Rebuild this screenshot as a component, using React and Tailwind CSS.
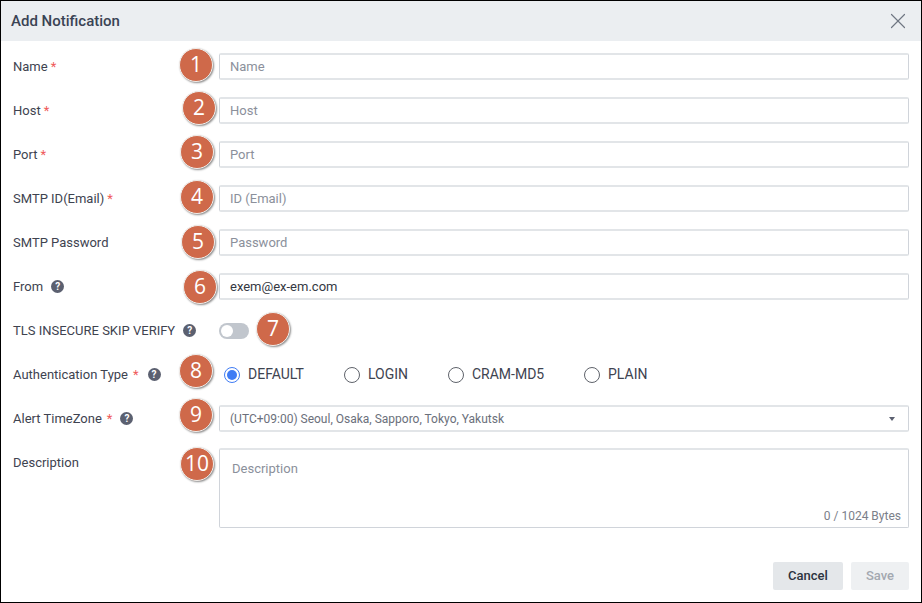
import { X } from "lucide-react";

const font = "font-['Roboto','Liberation_Sans',sans-serif]";

function Badge({ n, className }) {
  return (
    <span className={`absolute z-10 flex size-[34px] items-center justify-center rounded-full border-[1.5px] border-[#f1efec] bg-[#cf694a] text-[21px] font-['Open_Sans',sans-serif] font-medium text-white shadow-[1px_1px_2px_rgba(0,0,0,0.45)] ${className}`}>
      {n}
    </span>
  );
}

function Help({ className = "" }) {
  return (
    <span className={`flex size-[13px] items-center justify-center rounded-full bg-[#5b6070] text-[10px] font-bold leading-none text-white ${className}`}>
      ?
    </span>
  );
}

function Label({ children, required, help, starGap = "ml-[3px]", helpGap = "ml-[8px]" }) {
  return (
    <div className="flex w-[206px] shrink-0 items-center text-[13px] text-[#3e4350]">
      <span>{children}</span>
      {required && <span className={`${starGap} text-[#ef5a5a]`}>*</span>}
      {help && <Help className={helpGap} />}
    </div>
  );
}

function TextRow({ label, placeholder, value, required, help, badge, badgeClass }) {
  return (
    <div className="relative flex h-[27px] items-center">
      <Label required={required} help={help}>{label}</Label>
      <Badge n={badge} className={badgeClass} />
      <div className="flex h-[27px] flex-1 items-center rounded-[2px] border-x border-y-2 border-x-[#d0d4da] border-y-[#e2e5e8] px-[10px] text-[13px]">
        {value ? <span className="text-[#343842]">{value}</span> : <span className="text-[#8b909b]">{placeholder}</span>}
      </div>
    </div>
  );
}

function Radio({ label, checked, width }) {
  return (
    <div className={`flex items-center gap-[8px] text-[14px] text-[#3e4350] ${width}`}>
      {checked ? (
        <span className="flex size-4 items-center justify-center rounded-full border border-[#3f7cf4]">
          <span className="size-[10px] rounded-full bg-[#3f7cf4]" />
        </span>
      ) : (
        <span className="size-4 rounded-full border border-[#5f636b]" />
      )}
      <span>{label}</span>
    </div>
  );
}

export default function App() {
  return (
    <div className={`flex h-[603px] w-[922px] flex-col border border-black bg-white ${font}`}>
      <div className="flex h-10 shrink-0 items-center justify-between bg-[#ebeef1] pl-[10px] pr-[10px]">
        <span className="text-[15px] font-medium text-[#3a4354]">Add Notification</span>
        <X size={26} strokeWidth={1.1} className="text-[#6f7683]" />
      </div>

      <div className="flex flex-col gap-[17px] pl-3 pr-3 pt-3">
        <TextRow label="Name" placeholder="Name" required badge={1} badgeClass="left-[166px] top-[-5px]" />
        <TextRow label="Host" placeholder="Host" required badge={2} badgeClass="left-[169px] top-[-6px]" />
        <TextRow label="Port" placeholder="Port" required badge={3} badgeClass="left-[167px] top-[-6px]" />
        <TextRow label="SMTP ID(Email)" placeholder="ID (Email)" required badge={4} badgeClass="left-[167px] top-[-5px]" />
        <TextRow label="SMTP Password" placeholder="Password" badge={5} badgeClass="left-[168px] top-[-4px]" />
        <TextRow label="From" value="exem@ex-em.com" help badge={6} badgeClass="left-[170px] top-[-3px]" />

        <div className="relative flex h-[27px] items-center">
          <Label help>TLS INSECURE SKIP VERIFY</Label>
          <span className="flex h-4 w-[30px] items-center rounded-full bg-[#c1c6cd] pl-[2px]">
            <span className="size-3 rounded-full bg-white" />
          </span>
          <Badge n={7} className="left-[243px] top-[-5px]" />
        </div>

        <div className="relative flex h-[27px] items-center">
          <Label required help starGap="ml-[5px]" helpGap="ml-[9px]">Authentication Type</Label>
          <Badge n={8} className="left-[166px] top-[-7px]" />
          <div className="ml-[5px] flex items-center">
            <Radio label="DEFAULT" checked width="w-[120px]" />
            <Radio label="LOGIN" width="w-[104px]" />
            <Radio label="CRAM-MD5" width="w-[136px]" />
            <Radio label="PLAIN" />
          </div>
        </div>

        <div className="relative flex h-[27px] items-center">
          <Label required help starGap="ml-[5px]">Alert TimeZone</Label>
          <Badge n={9} className="left-[166px] top-[-7px]" />
          <div className="flex h-[27px] flex-1 items-center justify-between rounded-[2px] border-x border-y-2 border-x-[#d0d4da] border-y-[#e2e5e8] pl-[10px] pr-[13px] text-[12px] text-[#6b707b]">
            <span>(UTC+09:00) Seoul, Osaka, Sapporo, Tokyo, Yakutsk</span>
            <span className="border-x-[3.5px] border-t-4 border-x-transparent border-t-[#5b6070]" />
          </div>
        </div>

        <div className="relative -mt-px flex h-20 items-start">
          <div className="pt-[5px]">
            <Label>Description</Label>
          </div>
          <Badge n={10} className="left-[167px] top-[-1px]" />
          <div className="relative h-20 flex-1 rounded-[2px] border border-[#d0d4da] border-t-2 border-t-[#e2e5e8] px-3 pt-[9px] text-[13px] text-[#8b909b]">
            Description
            <span className="absolute bottom-[2px] right-[7px] text-[12px] text-[#7b808a]">0 / 1024 Bytes</span>
          </div>
        </div>
      </div>

      <div className="mt-[34px] flex justify-end gap-2 pr-3">
        <button className="h-7 w-[70px] rounded-[2px] bg-[#e4e7ea] text-[13px] font-medium text-[#2c3340]">Cancel</button>
        <button className="h-7 w-[58px] rounded-[2px] bg-[#eef0f2] text-[13px] font-medium text-[#a3a8b0]">Save</button>
      </div>
    </div>
  );
}
